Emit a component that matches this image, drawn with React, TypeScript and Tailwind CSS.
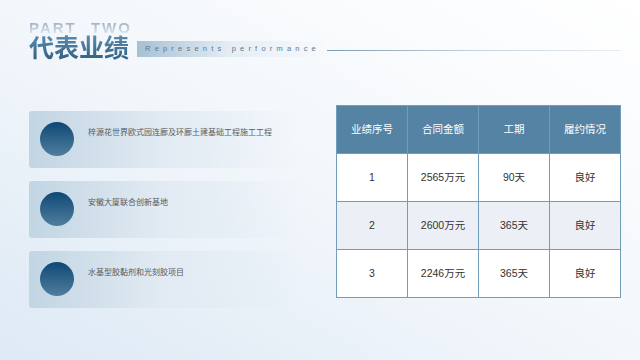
import React from 'react';

const projects = [
  '梓源花世界欧式园连廊及环廊土建基础工程施工工程',
  '安徽大厦联合创新基地',
  '水基型胶黏剂和光刻胶项目',
];

const rows = [
  { no: '1', amount: '2565万元', period: '90天', status: '良好' },
  { no: '2', amount: '2600万元', period: '365天', status: '良好' },
  { no: '3', amount: '2246万元', period: '365天', status: '良好' },
];

const headers = ['业绩序号', '合同金额', '工期', '履约情况'];

const App: React.FC = () => {
  return (
    <div
      className="w-[640px] h-[360px] overflow-hidden bg-gradient-to-tr from-[#dde9f5] via-[#f3f7fb] to-white"
      style={{ fontFamily: '"Liberation Sans", "Noto Sans CJK SC", sans-serif' }}
    >
      {/* heading */}
      <div className="pl-[29px] pt-[19px]">
        <div className="h-[15px] overflow-hidden text-[15px] leading-[17px] font-bold tracking-[2px] [word-spacing:8px] bg-gradient-to-b from-[#8aa3b9] to-[#dce7f0] bg-clip-text text-transparent">
          PART TWO
        </div>
        <div className="flex items-center">
          <div className="text-[25px] leading-[28px] font-bold bg-gradient-to-b from-[#5d8db0] to-[#2d5d80] bg-clip-text text-transparent">
            代表业绩
          </div>
          <div className="ml-[8px] mt-[2px] h-[16px] w-[190px] flex items-center pl-[8px] bg-gradient-to-r from-[#a7c0d4] via-[#e6eef5] to-transparent">
            <span className="text-[7.5px] tracking-[4.2px] text-[#5a7890] whitespace-nowrap">Represents performance</span>
          </div>
          <div className="mt-[4px] h-[1px] w-[294px] bg-gradient-to-r from-[#7d9bb2] via-[#c4d3df] to-[#e8eef4]" />
        </div>
      </div>

      {/* content */}
      <div className="flex items-start pl-[29px] mt-[43px]">
        <div className="flex flex-col gap-[13px] w-[272px] mt-[6px]">
          {projects.map((p) => (
            <div
              key={p}
              className="h-[57px] rounded-[3px] bg-gradient-to-r from-[#c2d5e3] via-[#e2ebf3] to-transparent flex items-start pl-[11px] pt-[11px]"
            >
              <div className="w-[34px] h-[34px] rounded-full bg-gradient-to-b from-[#0b4877] to-[#4f7f9d] shrink-0" />
              <div className="ml-[14px] mt-[6px] text-[8px] leading-[10px] text-[#5a5a5a]">{p}</div>
            </div>
          ))}
        </div>

        <table className="ml-[35px] w-[285px] border-collapse border border-[#6f9dba] table-fixed">
          <thead>
            <tr className="h-[48px] bg-[#5483a3]">
              {headers.map((h) => (
                <th key={h} className="border border-[#6f9dba] text-[10.5px] font-normal text-white text-center">
                  {h}
                </th>
              ))}
            </tr>
          </thead>
          <tbody>
            {rows.map((r, i) => (
              <tr key={r.no} className={`h-[48px] ${i === 1 ? 'bg-[#ecf0f6]' : 'bg-white'}`}>
                <td className="border border-[#6f9dba] text-center text-[10.5px] text-[#333]">{r.no}</td>
                <td className="border border-[#6f9dba] text-center text-[10.5px] text-[#333]">{r.amount}</td>
                <td className="border border-[#6f9dba] text-center text-[10.5px] text-[#333]">{r.period}</td>
                <td className="border border-[#6f9dba] text-center text-[10.5px] text-[#333]">{r.status}</td>
              </tr>
            ))}
          </tbody>
        </table>
      </div>
    </div>
  );
};

export default App;
